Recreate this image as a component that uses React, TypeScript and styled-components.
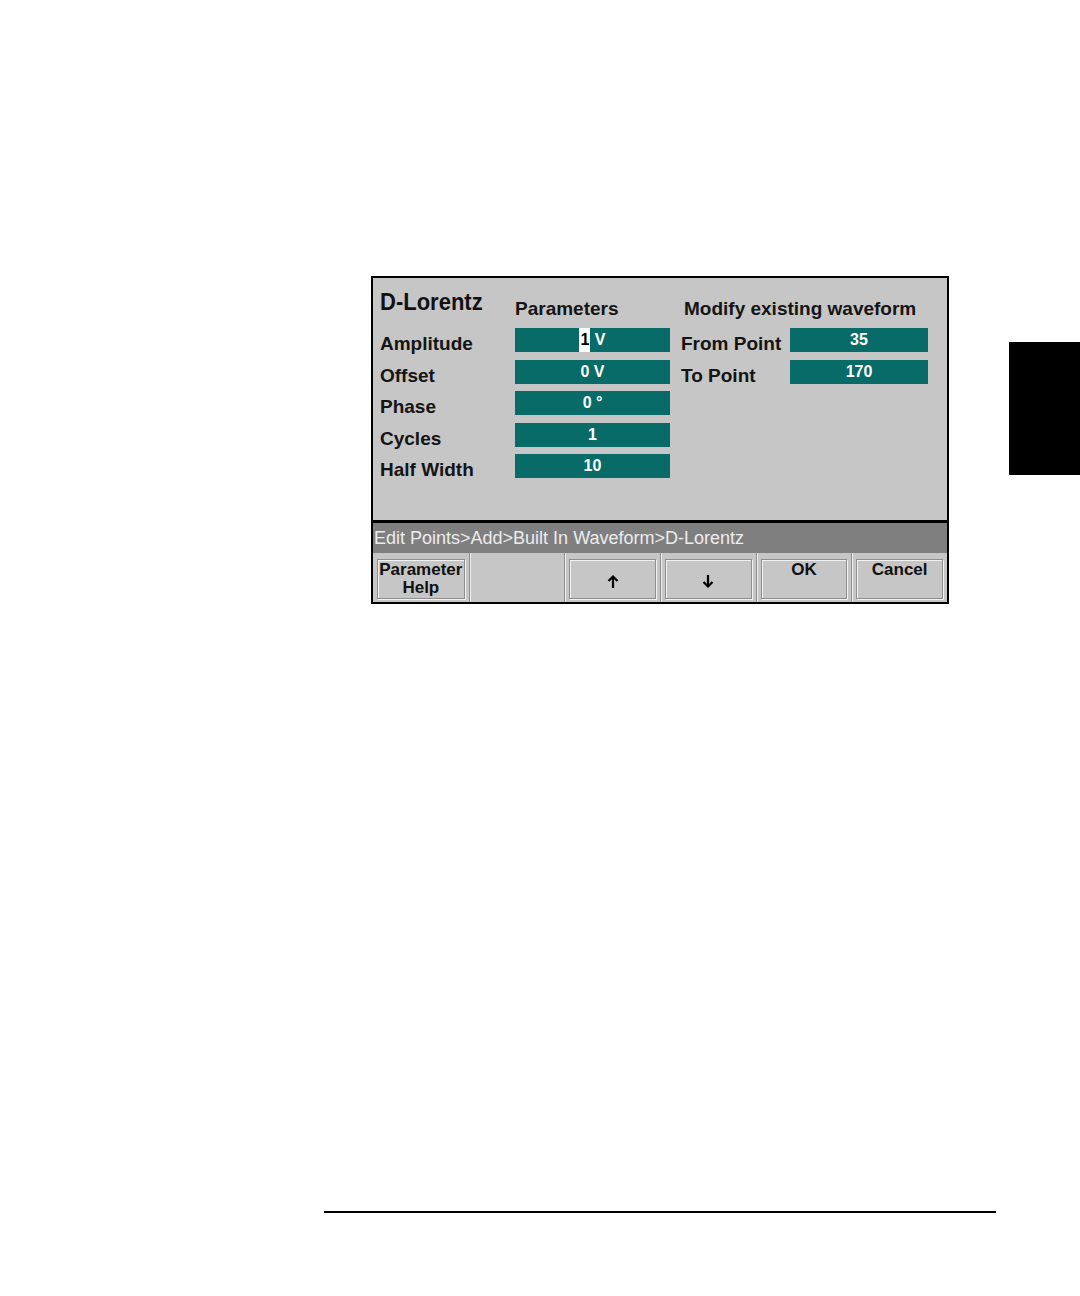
import React from 'react';
import styled, { createGlobalStyle } from 'styled-components';

const GlobalStyle = createGlobalStyle`
  html, body {
    margin: 0;
    padding: 0;
    background: #ffffff;
  }
  body {
    font-family: "Liberation Sans", Arial, sans-serif;
    overflow: hidden;
  }
`;

const Page = styled.div`
  width: 1080px;
  height: 1296px;
  display: flex;
  flex-direction: column;
`;

const TopRow = styled.div`
  display: flex;
  align-items: flex-start;
  padding-top: 276px;
`;

const EdgeTab = styled.div`
  width: 71px;
  height: 133px;
  margin-left: auto;
  margin-top: 66px;
  background: #000;
`;

const Screen = styled.div`
  margin-left: 371px;
  width: 574px;
  border: 2px solid #000;
  display: flex;
  flex-direction: column;
  background: #c6c6c6;
`;

const Panel = styled.div`
  height: 245px;
  box-sizing: border-box;
  padding-left: 7px;
  display: grid;
  grid-template-columns: 135px 155px 120px 138px;
  grid-template-rows: 42.5px repeat(5, 24px);
  row-gap: 7.5px;
  border-bottom: 3px solid #000;
`;

const Title = styled.div`
  font-size: 22px;
  font-weight: 700;
  color: #111;
  align-self: end;
  padding-bottom: 6px;
  line-height: 1;
  transform: scaleY(1.12);
  transform-origin: bottom left;
`;

const Heading = styled.div<{ $span?: boolean; $indent?: number }>`
  font-size: 19px;
  font-weight: 700;
  color: #151515;
  align-self: end;
  line-height: 1;
  padding-bottom: 3px;
  margin-left: ${p => p.$indent ?? 0}px;
  grid-column: ${p => (p.$span ? 'span 2' : 'auto')};
  white-space: nowrap;
`;

const Label = styled.div<{ $indent?: number }>`
  font-size: 19px;
  font-weight: 700;
  color: #141414;
  line-height: 24px;
  padding-top: 4px;
  margin-left: ${p => p.$indent ?? 0}px;
  white-space: nowrap;
`;

const Field = styled.div`
  background: #086b68;
  color: #fff;
  font-size: 16px;
  font-weight: 700;
  display: flex;
  align-items: center;
  justify-content: center;
  height: 24px;
  white-space: pre;
`;

const Cursor = styled.span`
  background: #fff;
  color: #000;
  padding: 0 1px;
  line-height: 24px;
`;

const Breadcrumb = styled.div`
  height: 30px;
  background: #7f7f7f;
  color: #ececec;
  font-size: 18px;
  line-height: 31px;
  padding-left: 1px;
  white-space: nowrap;
`;

const SoftkeyRow = styled.div`
  height: 49px;
  display: grid;
  grid-template-columns: repeat(6, 1fr);
  background: #c6c6c6;
`;

const Slot = styled.div<{ $first?: boolean }>`
  border-left: ${p => (p.$first ? 'none' : '1px solid #8e8e8e')};
  box-shadow: ${p => (p.$first ? 'none' : 'inset 1px 0 0 #ededed')};
  padding: 6px 4px 3px 4px;
  display: flex;
`;

const Softkey = styled.div<{ $center?: boolean }>`
  flex: 1;
  border: 1px solid #8e8e8e;
  box-shadow: inset 1px 1px 0 #f2f2f2, 1px 1px 0 #f2f2f2;
  display: flex;
  flex-direction: column;
  align-items: center;
  justify-content: ${p => (p.$center ? 'center' : 'flex-start')};
  font-size: 17px;
  font-weight: 700;
  color: #111;
  line-height: 18px;
  padding-top: ${p => (p.$center ? '0' : '1px')};
`;

const Rule = styled.div`
  margin-top: 607px;
  margin-left: 324px;
  width: 672px;
  height: 2px;
  background: #000;
`;

const Arrow = ({ down }: { down?: boolean }) => (
  <svg width="12" height="15" viewBox="0 0 12 15" style={{ transform: down ? 'rotate(180deg)' : undefined, marginTop: 4 }}>
    <path d="M6 14V2.5M1.5 7L6 2.5 10.5 7" fill="none" stroke="#000" strokeWidth="2.2" />
  </svg>
);

const params = [
  { name: 'Amplitude', value: <><Cursor>1</Cursor> V</> },
  { name: 'Offset', value: '0 V' },
  { name: 'Phase', value: '0 °' },
  { name: 'Cycles', value: '1' },
  { name: 'Half Width', value: '10' },
];

const points = [
  { name: 'From Point', value: '35' },
  { name: 'To Point', value: '170' },
];

function App() {
  return (
    <Page>
      <GlobalStyle />
      <TopRow>
        <Screen>
          <Panel>
            <Title>D-Lorentz</Title>
            <Heading>Parameters</Heading>
            <Heading $span $indent={14}>Modify existing waveform</Heading>
            {params.map((p, i) => (
              <React.Fragment key={p.name}>
                <Label>{p.name}</Label>
                <Field>{p.value}</Field>
                {points[i] ? (
                  <>
                    <Label $indent={11}>{points[i].name}</Label>
                    <Field>{points[i].value}</Field>
                  </>
                ) : (
                  <>
                    <div />
                    <div />
                  </>
                )}
              </React.Fragment>
            ))}
          </Panel>
          <Breadcrumb>Edit Points&gt;Add&gt;Built In Waveform&gt;D-Lorentz</Breadcrumb>
          <SoftkeyRow>
            <Slot $first>
              <Softkey>
                <span>Parameter</span>
                <span>Help</span>
              </Softkey>
            </Slot>
            <Slot />
            <Slot>
              <Softkey $center><Arrow /></Softkey>
            </Slot>
            <Slot>
              <Softkey $center><Arrow down /></Softkey>
            </Slot>
            <Slot>
              <Softkey>OK</Softkey>
            </Slot>
            <Slot>
              <Softkey>Cancel</Softkey>
            </Slot>
          </SoftkeyRow>
        </Screen>
        <EdgeTab />
      </TopRow>
      <Rule />
    </Page>
  );
}

export default App;
